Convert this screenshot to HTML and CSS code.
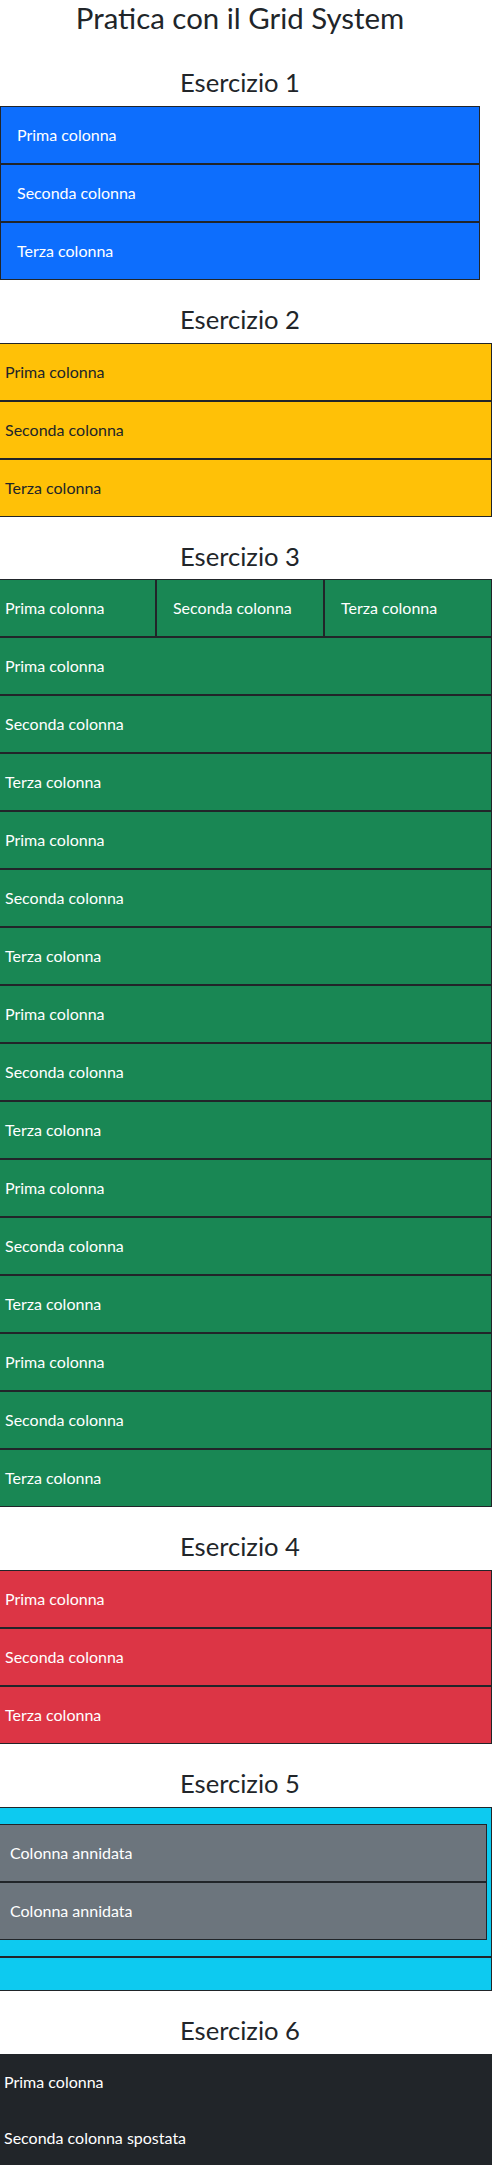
FILE: index.html
```html
<!DOCTYPE html>
<html lang="it">
<head>
<meta charset="utf-8">
<title>Pratica con il Grid System</title>
<link rel="stylesheet" href="styles.css">
</head>
<body>
<div class="container">
  <h1 class="title">Pratica con il Grid System</h1>

  <section class="exercise">
    <h2 class="ex-title">Esercizio 1</h2>
    <div class="stack">
      <div class="cell bg-blue">Prima colonna</div>
      <div class="cell bg-blue">Seconda colonna</div>
      <div class="cell bg-blue">Terza colonna</div>
    </div>
  </section>

  <section class="exercise">
    <h2 class="ex-title">Esercizio 2</h2>
    <div class="row">
      <div class="col-12 cell bg-yellow">Prima colonna</div>
      <div class="col-12 cell bg-yellow">Seconda colonna</div>
      <div class="col-12 cell bg-yellow">Terza colonna</div>
    </div>
  </section>

  <section class="exercise">
    <h2 class="ex-title">Esercizio 3</h2>
    <div class="row">
      <div class="col-4 cell bg-green">Prima colonna</div>
      <div class="col-4 cell bg-green">Seconda colonna</div>
      <div class="col-4 cell bg-green">Terza colonna</div>
    </div>
    <div class="row">
      <div class="col-12 cell bg-green">Prima colonna</div>
      <div class="col-12 cell bg-green">Seconda colonna</div>
      <div class="col-12 cell bg-green">Terza colonna</div>
      <div class="col-12 cell bg-green">Prima colonna</div>
      <div class="col-12 cell bg-green">Seconda colonna</div>
      <div class="col-12 cell bg-green">Terza colonna</div>
      <div class="col-12 cell bg-green">Prima colonna</div>
      <div class="col-12 cell bg-green">Seconda colonna</div>
      <div class="col-12 cell bg-green">Terza colonna</div>
      <div class="col-12 cell bg-green">Prima colonna</div>
      <div class="col-12 cell bg-green">Seconda colonna</div>
      <div class="col-12 cell bg-green">Terza colonna</div>
      <div class="col-12 cell bg-green">Prima colonna</div>
      <div class="col-12 cell bg-green">Seconda colonna</div>
      <div class="col-12 cell bg-green">Terza colonna</div>
    </div>
  </section>

  <section class="exercise">
    <h2 class="ex-title">Esercizio 4</h2>
    <div class="row">
      <div class="col-12 cell bg-red">Prima colonna</div>
      <div class="col-12 cell bg-red">Seconda colonna</div>
      <div class="col-12 cell bg-red">Terza colonna</div>
    </div>
  </section>

  <section class="exercise">
    <h2 class="ex-title">Esercizio 5</h2>
    <div class="row">
      <div class="col-12 cell bg-cyan">
        <div class="row">
          <div class="col-12 cell bg-gray">Colonna annidata</div>
          <div class="col-12 cell bg-gray">Colonna annidata</div>
        </div>
      </div>
      <div class="col-12 cell bg-cyan"></div>
    </div>
  </section>

  <section class="exercise">
    <h2 class="ex-title">Esercizio 6</h2>
    <div class="row">
      <div class="col-12 cell-plain bg-dark">Prima colonna</div>
      <div class="col-12 cell-plain bg-dark">Seconda colonna spostata</div>
    </div>
  </section>
</div>
</body>
</html>
```
FILE: styles.css
```css
html, body {
  margin: 0;
  padding: 0;
}

body {
  font-family: Lato, "Open Sans", "Noto Sans", sans-serif;
  font-size: 16px;
  line-height: 24px;
  color: #212529;
  background: #ffffff;
  overflow-x: hidden;
}

.container {
  width: 480px;
  display: flex;
  flex-direction: column;
}

.title {
  margin: 0 0 8px;
  font-size: 29.4px;
  line-height: 1.2;
  font-weight: 400;
  text-align: center;
}

.exercise {
  margin-top: 24px;
}

.ex-title {
  margin: 0 0 8px;
  font-size: 25.6px;
  line-height: 1.2;
  font-weight: 400;
  text-align: center;
}

.stack {
  display: flex;
  flex-direction: column;
}

.row {
  display: flex;
  flex-wrap: wrap;
  margin: 0 -12px;
}

.col-12 {
  box-sizing: border-box;
  width: 100%;
}

.col-4 {
  box-sizing: border-box;
  width: 33.3333%;
}

.cell {
  box-sizing: border-box;
  border: 1px solid #212529;
  padding: 16px;
  min-height: 34px;
}

.cell-plain {
  box-sizing: border-box;
  padding: 16px;
}

.bg-blue { background: #0d6efd; color: #ffffff; }
.bg-yellow { background: #ffc107; color: #212529; }
.bg-green { background: #198754; color: #ffffff; }
.bg-red { background: #dc3545; color: #ffffff; }
.bg-cyan { background: #0dcaf0; color: #212529; }
.bg-gray { background: #6c757d; color: #ffffff; }
.bg-dark { background: #212529; color: #ffffff; }
```
